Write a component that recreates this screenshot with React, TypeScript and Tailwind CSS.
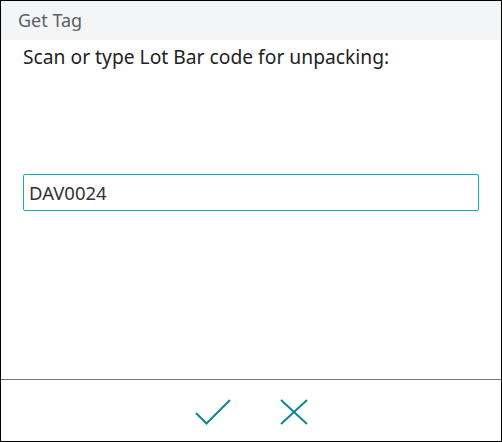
const CheckIcon = () => (
  <svg width="36" height="26" viewBox="0 0 36 26" fill="none">
    <path d="M1 14 L11.5 24.5 L35 1" stroke="#0d8790" strokeWidth="2" />
  </svg>
);

const CloseIcon = () => (
  <svg width="28" height="26" viewBox="0 0 28 26" fill="none">
    <path d="M1 1 L27 25 M27 1 L1 25" stroke="#0d8790" strokeWidth="2" />
  </svg>
);

const App = () => {
  return (
    <div
      className="w-[502px] h-[442px] flex flex-col border border-black bg-white"
      style={{ fontFamily: '"Noto Sans", "Open Sans", sans-serif' }}
    >
      <div className="h-[39px] bg-[#f4f5f7] flex items-center px-[17px] text-[18px] text-[#5b5f66]">
        Get Tag
      </div>
      <main className="flex-1 px-[22px]">
        <p className="mt-[4px] text-[19.25px] leading-[26px] text-[#222]">
          Scan or type Lot Bar code for unpacking:
        </p>
        <input
          className="mt-[104px] w-[456px] h-[37px] border border-[#1aaab8] rounded-[2px] px-[5px] text-[18.5px] text-[#333] outline-none"
          defaultValue="DAV0024"
        />
      </main>
      <footer className="h-[62px] border-t border-[#767676] flex items-center justify-center gap-[49px] pt-[2px]">
        <CheckIcon />
        <CloseIcon />
      </footer>
    </div>
  );
};

export default App;
